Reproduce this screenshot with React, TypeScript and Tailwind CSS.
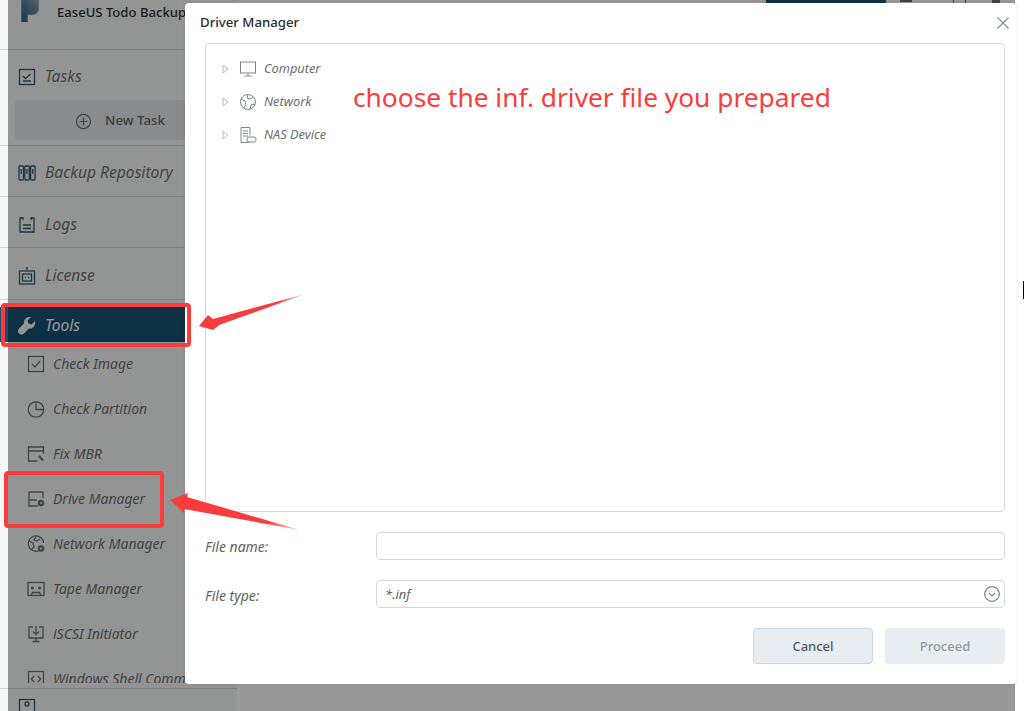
import React from "react";

const S = { fill: "none", stroke: "currentColor", strokeWidth: 1.3 } as const;

const icons: Record<string, React.ReactNode> = {
  tasks: (<><rect x="1.5" y="1.5" width="15" height="15" {...S} /><path d="M5 8l2.5 2.5L12.5 6M5 13h8" {...S} /></>),
  repo: (<><rect x="1" y="2" width="4.5" height="14" rx="1" {...S} /><rect x="6.8" y="2" width="4.5" height="14" rx="1" {...S} /><rect x="12.6" y="2" width="4.5" height="14" rx="1" {...S} /><path d="M3.2 5v5M9 5v5M14.8 5v5" {...S} /></>),
  logs: (<><path d="M5 2H2v14h14V2h-3M5 1v3M13 1v3" {...S} /><path d="M5 9h8M5 12.5h8" {...S} /></>),
  license: (<><rect x="1.5" y="4" width="15" height="13" {...S} /><rect x="4.5" y="7" width="9" height="7" {...S} /><path d="M9 0v3M7 10.5h1M10 10.5h1" {...S} /></>),
  check: (<><rect x="1.5" y="1.5" width="15" height="15" {...S} /><path d="M5 9l3 3 5-6" {...S} /></>),
  partition: (<><circle cx="9" cy="9.5" r="7.7" {...S} /><path d="M9 1.8v7.7h7.7" {...S} /></>),
  mbr: (<><path d="M16.5 9V2H1.5v14h9M1.5 6h15" {...S} /><path d="M12 11l4 4.5" stroke="currentColor" strokeWidth="2.2" /></>),
  drive: (<><path d="M16 8V2H2v14h9M2 10h8" {...S} /><circle cx="14" cy="13" r="3.2" fill="currentColor" /><circle cx="14" cy="13" r="1" fill="#f5f8f7" /></>),
  net: (<><path d="M11.5 15.8A7.7 7.7 0 1 1 16.7 8" {...S} /><path d="M2 6l4 2 1 4-2 2M9 1.5L7 5l3 1 3-2" {...S} /><circle cx="14" cy="13.5" r="3.2" fill="currentColor" /><circle cx="14" cy="13.5" r="1" fill="#f5f8f7" /></>),
  tape: (<><rect x="1" y="2.5" width="16" height="13" {...S} /><circle cx="5.5" cy="8" r="1.6" fill="currentColor" /><circle cx="12.5" cy="8" r="1.6" fill="currentColor" /><path d="M4 15.5l1.5-3h7l1.5 3" {...S} /></>),
  iscsi: (<><path d="M6 2H2v11h14V2h-4M9 1v8M6 6.5L9 9.5l3-3M9 13v3M5.5 16.5h7" {...S} /></>),
  shell: (<><rect x="1.5" y="1.5" width="15" height="15" {...S} /><path d="M7 6L4.5 9 7 12M11 6l2.500 3L11 12" {...S} /></>),
  more: (<><rect x="1.5" y="1.5" width="15" height="15" {...S} /><circle cx="9" cy="6" r="2" {...S} /></>),
};

function Icon({ name, className = "" }: { name: string; className?: string }) {
  return (
    <svg viewBox="0 0 18 18" className={`w-[18px] h-[18px] shrink-0 ${className}`}>
      {icons[name]}
    </svg>
  );
}

function NavRow({ icon, label, cls }: { icon: string; label: string; cls: string }) {
  return (
    <div className={`flex items-center pl-[18px] gap-[9px] text-[15.6px] italic text-[#6d7271] ${cls}`}>
      <Icon name={icon} className="text-[#2f5b74]" />
      <span>{label}</span>
    </div>
  );
}

const subs = [
  ["check", "Check Image"],
  ["partition", "Check Partition"],
  ["mbr", "Fix MBR"],
  ["drive", "Drive Manager"],
  ["net", "Network Manager"],
  ["tape", "Tape Manager"],
  ["iscsi", "iSCSI Initiator"],
  ["shell", "Windows Shell Command"],
];

function Tree({ label, children }: { label: string; children: React.ReactNode }) {
  return (
    <div className="flex items-center h-[33px]">
      <svg viewBox="0 0 8 10" className="w-2 h-2.5 ml-[16px] text-[#b9bdbc]">
        <path d="M1 1l5 4-5 4z" fill="none" stroke="currentColor" />
      </svg>
      <svg viewBox="0 0 18 18" className="w-[18px] h-[18px] ml-[9px] text-[#7f8584]">
        {children}
      </svg>
      <span className="ml-[7px] text-[12.8px] italic text-[#6b6f6e]">{label}</span>
    </div>
  );
}

export default function App() {
  return (
    <div className="relative flex w-[1024px] h-[711px] overflow-hidden bg-white" style={{ fontFamily: '"Noto Sans", "Open Sans", sans-serif' }}>
      {/* Sidebar */}
      <aside className="w-[237px] shrink-0 bg-[#f6f9f8] flex flex-col">
        <div className="h-[50px] shrink-0 border-b border-[#d0d3d2] pl-[21px] flex items-start gap-[17px] overflow-hidden">
          <svg viewBox="0 0 20 24" className="w-[19px] h-[22px] shrink-0">
            <defs>
              <linearGradient id="lg" x1="0" y1="1" x2="1" y2="0">
                <stop offset="0" stopColor="#1c5f85" />
                <stop offset="1" stopColor="#8ea0ac" />
              </linearGradient>
            </defs>
            <path d="M0 0h19v10c0 3-3 6-7 6H7v8H0z" fill="url(#lg)" />
          </svg>
          <span className="text-[13.1px] font-medium leading-[24px] text-[#2a2d2d] whitespace-nowrap">EaseUS Todo Backup</span>
        </div>
        <div className="h-[96px] shrink-0 border-b border-[#d0d3d2]">
          <NavRow icon="tasks" label="Tasks" cls="h-[50px] pt-[3px]" />
          <div className="ml-[15px] w-[210px] h-[40px] pt-[2px] bg-[#e3e9ec] rounded-[4px] flex items-center justify-center gap-[13px] text-[13.3px] font-medium text-[#626868]">
            <svg viewBox="0 0 18 18" className="w-[17px] h-[17px] text-[#6d7271]">
              <circle cx="9" cy="9" r="7.5" {...S} />
              <path d="M9 5v8M5 9h8" {...S} />
            </svg>
            <span>New Task</span>
          </div>
        </div>
        <div className="shrink-0 border-b border-[#d0d3d2]"><NavRow icon="repo" label="Backup Repository" cls="h-[50px] pt-[3px]" /></div>
        <div className="shrink-0 border-b border-[#d0d3d2]"><NavRow icon="logs" label="Logs" cls="h-[50px] pt-[5px]" /></div>
        <div className="shrink-0 border-b border-[#d0d3d2]"><NavRow icon="license" label="License" cls="h-[51px] pt-[4px]" /></div>
        <div className="h-[35px] mt-[7px] pt-[3px] shrink-0 bg-[#175073] flex items-center pl-[18px] gap-[9px] text-[15.6px] italic text-white">
          <svg viewBox="0 0 18 18" className="w-[18px] h-[18px] shrink-0">
            <path d="M17 4l-3.500 3.500-3-1-1-3L13 0C8.500-.5 5.500 2.500 6 6.500L1 11.500c-1.500 1.500-1.500 3.500 0 5s3.500 1.500 5 0l5-5c4 .5 7-3 6-7.500z" fill="#f3f6f6" />
          </svg>
          <span>Tools</span>
        </div>
        <div className="h-[341px] shrink-0 overflow-hidden">
          {subs.map(([ic, l]) => (
            <div key={l} className="h-[45px] pb-[2px] flex items-center pl-[27px] gap-[8px] text-[14px] italic text-[#6d7271] whitespace-nowrap">
              <Icon name={ic} className="text-[#6d7271]" />
              <span>{l}</span>
            </div>
          ))}
        </div>
        <div className="mt-[5px] shrink-0 border-t border-[#d0d3d2]"><NavRow icon="more" label="" cls="h-[36px]" /></div>
      </aside>

      {/* Main behind the dialog */}
      <main className="flex-1 bg-white">
        <div className="h-[3px] overflow-hidden flex items-start text-[#175073]">
          <div className="ml-[529px] w-[120px] h-[30px] bg-[#175073]" />
          <div className="ml-[14px] w-[12px] h-[2px] bg-[#6d7271]" />
          <div className="ml-[41px] w-[13px] h-[3px] border-x border-[#6d7271]" />
          <div className="ml-[26px] w-[8px] h-[3px] bg-[#6d7271]" />
        </div>
      </main>

      {/* Overlay */}
      <div className="absolute left-2 right-[9px] inset-y-0 bg-black/40" />

      {/* Dialog */}
      <section className="absolute left-[185px] top-[3px] w-[831px] h-[681px] bg-white rounded-[4px] shadow-[0_0_4px_rgba(0,0,0,0.08)] pl-[20px] pr-[11px] flex flex-col">
        <header className="h-[40px] shrink-0 flex items-center justify-between -ml-[5px] -mr-[4px]">
          <span className="text-[13.2px] font-medium text-[#2b2e2e]">Driver Manager</span>
          <svg viewBox="0 0 12 12" className="w-3 h-3 text-[#84918f]">
            <path d="M.5.5l11 11M11.500.5l-11 11" stroke="currentColor" strokeWidth="1.2" />
          </svg>
        </header>
        <div className="h-[469px] shrink-0 border border-[#d6d8d8] rounded-[4px] pt-[8px]">
          <Tree label="Computer">
            <rect x="1.5" y="2" width="15" height="11" stroke="currentColor" fill="none" />
            <path d="M9 13v3M5.500 16h7" stroke="currentColor" fill="none" />
          </Tree>
          <Tree label="Network">
            <circle cx="9" cy="9" r="7.5" stroke="currentColor" fill="none" />
            <path d="M2 6l4 2 1 4-2 3M9 1.500L8 5l3 1 3-2M11 16l1-4 4-1" stroke="currentColor" fill="none" />
          </Tree>
          <Tree label="NAS Device">
            <path d="M10 16.500H2v-15h9v8M4 5h5M4 7.500h5M4 10h5" stroke="currentColor" fill="none" />
            <rect x="8" y="11" width="9" height="5" rx="2" stroke="currentColor" fill="#fff" />
          </Tree>
        </div>
        <div className="mt-[20px] h-[28px] shrink-0 flex items-center">
          <label className="w-[171px] pt-[1px] text-[14px] italic text-[#5f6362]">File name:</label>
          <div className="w-[629px] h-full border border-[#d6d8d8] rounded-[4px]" />
        </div>
        <div className="mt-[20px] h-[28px] shrink-0 flex items-center">
          <label className="w-[171px] pt-[3px] text-[14px] italic text-[#5f6362]">File type:</label>
          <div className="w-[629px] h-full border border-[#d6d8d8] rounded-[4px] flex items-center justify-between pl-[8px] pr-[4px]">
            <span className="text-[13px] pt-[2px] italic text-[#5f6362]">*.inf</span>
            <svg viewBox="0 0 16 16" className="w-4 h-4 text-[#6f8583]">
              <circle cx="8" cy="8" r="7.300" stroke="currentColor" fill="none" strokeWidth="1.2" />
              <path d="M4.800 6.800L8 10l3.200-3.200" stroke="currentColor" fill="none" strokeWidth="1.2" />
            </svg>
          </div>
        </div>
        <div className="mt-[20px] flex justify-end gap-[12px] w-[800px]">
          <button className="w-[120px] h-[36px] pt-[2px] bg-[#e7edf0] border border-[#c9d9e4] rounded-[4px] text-[13px] font-medium text-[#555b5d]">Cancel</button>
          <button className="w-[120px] h-[36px] pt-[2px] bg-[#e7edf0] rounded-[4px] text-[13px] font-medium text-[#949a9c]">Proceed</button>
        </div>
      </section>

      {/* Screenshot annotations */}
      <div className="absolute left-[1px] top-[303px] w-[190px] h-[44px] border-[4px] border-[#fb3c3c] rounded-[4px]" />
      <div className="absolute left-[4px] top-[471px] w-[160px] h-[57px] border-[4px] border-[#fb3c3c] rounded-[4px]" />
      <svg className="absolute left-0 top-0 w-[1024px] h-[711px] pointer-events-none" viewBox="0 0 1024 711">
        <defs>
          <linearGradient id="a1" x1="0" y1="0" x2="1" y2="0">
            <stop offset="0.75" stopColor="#fb3c3c" />
            <stop offset="1" stopColor="#fb3c3c" stopOpacity="0.25" />
          </linearGradient>
        </defs>
        <polygon points="199,326 208,315 213,319 305,294 219,325 213,330" fill="url(#a1)" />
        <polygon points="170,500 188,493 187,497 300,530 184,509 184,513" fill="url(#a1)" />
      </svg>
      <span className="absolute left-[353px] top-[79px] text-[26.3px] leading-[36px] text-[#fb3c3c] whitespace-nowrap">choose the inf. driver file you prepared</span>
      <div className="absolute right-0 top-[281px] w-[1.500px] h-[18px] bg-black" />
    </div>
  );
}
